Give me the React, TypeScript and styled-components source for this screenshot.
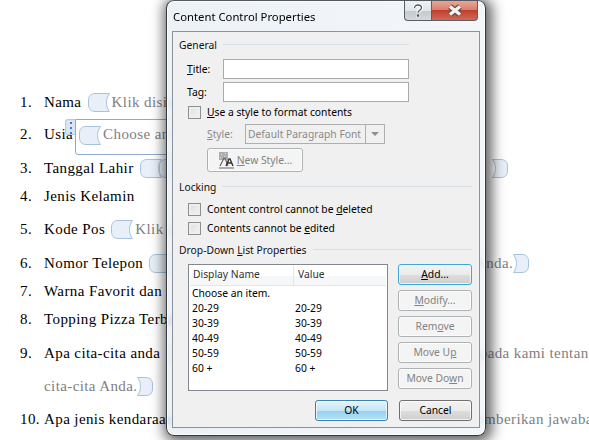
import styled, { createGlobalStyle } from "styled-components";

const GlobalStyle = createGlobalStyle`
  html, body {
    margin: 0;
    padding: 0;
    width: 589px;
    height: 440px;
    overflow: hidden;
    background: #fff;
  }
`;

const Page = styled.div`
  position: relative;
  width: 589px;
  height: 440px;
  overflow: hidden;
  background: #fff;
`;

/* word document behind the dialog */
const DocList = styled.div`
  display: flex;
  flex-direction: column;
  padding-top: 92px;
  font-family: "Liberation Serif", serif;
  font-size: 15px;
  letter-spacing: 0.4px;
  color: #000;
`;

const Row = styled.div<{ $h: number }>`
  display: flex;
  align-items: center;
  height: ${(p) => p.$h}px;
  white-space: nowrap;
`;

const Num = styled.span`
  width: 24px;
  margin-left: 20px;
  flex: none;
`;

const Hint = styled.span<{ $ml?: number }>`
  color: #808080;
  margin-left: ${(p) => p.$ml ?? 2}px;
`;

const Indent = styled.span`
  margin-left: 44px;
  color: #808080;
`;

const Selected = styled.div`
  position: relative;
  display: flex;
  align-items: flex-start;
  width: 400px;
  height: 36px;
  margin-left: 2px;
  margin-top: 4px;
  padding: 6px 0 0 3px;
  box-sizing: border-box;
  border: 1px solid #8fa9cc;
  border-radius: 0 3px 3px 3px;
`;

const Handle = styled.div`
  position: absolute;
  left: -11px;
  top: -1px;
  display: flex;
  flex-direction: column;
  align-items: center;
  gap: 3px;
  width: 10px;
  height: 16px;
  padding-top: 2px;
  box-sizing: border-box;
  background: #dbe5f1;
  border: 1px solid #b8c9de;
  border-right: none;
  border-radius: 3px 0 0 3px;
`;

const Dot = styled.i`
  width: 2px;
  height: 2px;
  background: #3d7fe0;
`;

const CapSvg = styled.svg<{ $ml?: number }>`
  flex: none;
  margin-left: ${(p) => p.$ml ?? 0}px;
`;

const OpenCap = ({ ml = 2 }: { ml?: number }) => (
  <CapSvg $ml={ml} width="22" height="19" viewBox="0 0 22 19">
    <path
      d="M21.5.5H7C3 .5.5 3 .5 7v5c0 4 2.500 6.500 6.500 6.500h14.500C19 15 18.500 12 18.500 9.500S19 4 21.500.5z"
      fill="#e9eff8"
      stroke="#a8c2dc"
    />
  </CapSvg>
);

const CloseCap = ({ ml }: { ml?: number }) => (
  <CapSvg $ml={ml} width="16" height="19" viewBox="0 0 16 19">
    <path
      d="M.5.5H9c4 0 6.500 2.500 6.500 6.500v5c0 4-2.500 6.500-6.500 6.500H.5C3 15 3.500 12 3.500 9.500S3 4 .5.500z"
      fill="#e9eff8"
      stroke="#a8c2dc"
    />
  </CapSvg>
);

/* dialog window */
const Dialog = styled.div`
  position: absolute;
  left: 166px;
  top: 0;
  width: 320px;
  height: 436px;
  box-sizing: border-box;
  display: flex;
  flex-direction: column;
  padding: 0 5px 7px;
  border: 1px solid #35383b;
  border-top-color: #55585c;
  border-radius: 8px;
  background: linear-gradient(90deg, rgba(232, 238, 244, 0.8), rgba(240, 244, 248, 0.8));
  backdrop-filter: blur(3px);
  box-shadow: 2px 2px 13px 4px rgba(0, 0, 0, 0.62), inset 0 0 0 1px rgba(255, 255, 255, 0.75);
  font-family: "Noto Sans", "Open Sans", sans-serif;
  font-size: 10.300px;
  color: #000;
`;

const TitleBar = styled.div`
  display: flex;
  align-items: flex-start;
  justify-content: space-between;
  height: 30px;
  flex: none;
`;

const TitleText = styled.div`
  padding: 8px 0 0 1px;
  font-size: 11.300px;
  line-height: 15px;
`;

const WinButtons = styled.div`
  display: flex;
  margin-right: 2px;
`;

const WinBtn = styled.div<{ $close?: boolean }>`
  display: flex;
  align-items: center;
  justify-content: center;
  height: 20px;
  width: ${(p) => (p.$close ? 46 : 28)}px;
  box-sizing: border-box;
  border: 1px solid #5a5f66;
  border-top: none;
  border-left-width: ${(p) => (p.$close ? 0 : 1)}px;
  border-radius: ${(p) => (p.$close ? "0 0 4px 0" : "0 0 0 4px")};
  background: ${(p) =>
    p.$close
      ? "linear-gradient(180deg, #e8a79a 0%, #d9806f 45%, #c0402c 50%, #cf6a58 100%)"
      : "linear-gradient(180deg, #eef1f3 0%, #e2e6e9 50%, #c3c9cd 52%, #d5d9dc 100%)"};
`;

const Client = styled.div`
  flex: 1;
  display: flex;
  flex-direction: column;
  padding: 5px 6px 0;
  border: 1px solid #8a929b;
  background: #f0f0f0;
`;

const Legend = styled.div<{ $w?: number; $mt?: number }>`
  display: flex;
  align-items: center;
  gap: 6px;
  height: 15px;
  width: ${(p) => (p.$w ? `${p.$w}px` : "auto")};
  margin-top: ${(p) => p.$mt ?? 0}px;
  margin-right: 1px;
  color: #111;
  &::after {
    content: "";
    flex: 1;
    height: 1px;
    background: #d5dfe5;
  }
`;

const FieldRow = styled.div<{ $mt: number }>`
  display: flex;
  align-items: center;
  margin-top: ${(p) => p.$mt}px;
  padding-left: 8px;
`;

const FieldLabel = styled.span`
  width: 36px;
`;

const TextInput = styled.div`
  width: 186px;
  height: 20px;
  box-sizing: border-box;
  background: #fff;
  border: 1px solid #ababab;
`;

const CheckRow = styled.div<{ $mt: number }>`
  display: flex;
  align-items: center;
  gap: 6px;
  height: 13px;
  margin-top: ${(p) => p.$mt}px;
  padding-left: 9px;
`;

const CheckText = styled.span`
  padding-bottom: 2px;
`;

const Box = styled.span`
  flex: none;
  width: 13px;
  height: 13px;
  box-sizing: border-box;
  border: 1px solid #8e8f8f;
  background: linear-gradient(135deg, #dcdcdc, #f6f6f6);
  box-shadow: inset 0 0 0 2px #eee;
`;

const U = styled.span`
  text-decoration: underline;
`;

const StyleRow = styled.div`
  display: flex;
  align-items: center;
  margin-top: 5px;
  padding-left: 28px;
  color: #8a8a8a;
`;

const StyleLabel = styled.span`
  width: 38px;
`;

const Select = styled.div`
  display: flex;
  align-items: center;
  justify-content: space-between;
  width: 140px;
  height: 20px;
  box-sizing: border-box;
  padding-left: 2px;
  border: 1px solid #afafaf;
  white-space: nowrap;
`;

const SelectArrow = styled.span`
  display: flex;
  align-items: center;
  justify-content: center;
  flex: none;
  width: 18px;
  height: 18px;
  border-left: 1px solid #afafaf;
  &::after {
    content: "";
    border: 4px solid transparent;
    border-top: 4px solid #8f8f8f;
    margin-top: 4px;
  }
`;

const Button = styled.div<{ $w?: number; $disabled?: boolean; $primary?: boolean; $focus?: boolean }>`
  display: flex;
  align-items: center;
  justify-content: center;
  flex: none;
  width: ${(p) => p.$w ?? 74}px;
  height: 21px;
  box-sizing: border-box;
  padding-bottom: 1px;
  border-radius: 3px;
  white-space: nowrap;
  color: ${(p) => (p.$disabled ? "#838383" : "#000")};
  border: 1px solid
    ${(p) => (p.$disabled ? "#adb2b5" : p.$primary ? "#3c7fb1" : p.$focus ? "#3fa6d6" : "#707070")};
  background: ${(p) =>
    p.$disabled
      ? "#f4f4f4"
      : p.$primary
        ? "linear-gradient(180deg, #e5f4fc 0%, #c4e5f6 50%, #98d1ef 52%, #b3e0f9 100%)"
        : "linear-gradient(180deg, #f2f2f2 0%, #ebebeb 50%, #dddddd 52%, #cfcfcf 100%)"};
  box-shadow: inset 0 0 0 1px rgba(255, 255, 255, 0.7);
`;

const NewStyleBtn = styled(Button)`
  gap: 1px;
  height: 24px;
  margin-top: 4px;
  margin-left: 28px;
`;

const ListArea = styled.div`
  display: flex;
  gap: 10px;
  margin-top: 7px;
  padding-left: 9px;
`;

const ListBox = styled.div`
  width: 200px;
  height: 127px;
  box-sizing: border-box;
  padding: 1px;
  border: 1px solid #828790;
  background: #fff;
`;

const ListHead = styled.div`
  display: grid;
  grid-template-columns: 103px 1fr;
  height: 19px;
  line-height: 17px;
  color: #333;
  border-bottom: 1px solid #e5e5e5;
  background: linear-gradient(180deg, #fff 50%, #f6f7f9 50%);
`;

const HeadCell = styled.span`
  padding-left: 3px;
  & + & {
    border-left: 1px solid #e3e5e8;
    padding-left: 4px;
  }
`;

const ListRow = styled.div`
  display: grid;
  grid-template-columns: 103px 1fr;
  height: 15px;
  line-height: 15px;
  padding-left: 2px;
`;

const SideButtons = styled.div`
  display: flex;
  flex-direction: column;
  gap: 5px;
`;

const Footer = styled.div`
  display: flex;
  justify-content: flex-end;
  gap: 11px;
  margin-top: 9px;
  padding-right: 1px;
`;

const options = ["20-29", "30-39", "40-49", "50-59", "60 +"];

const NewStyleIcon = () => (
  <svg width="18" height="18" viewBox="0 0 18 18">
    <rect x="1" y="1" width="9" height="8" fill="#a0a0a0" opacity="0.85" />
    <path d="M3 3h1v1H3zM7 2h1v1H7zM2 6h1v1H2zM6 5h1v1H6z" fill="#e6e6e6" />
    <path d="M2 15 6 7h1l3 8" fill="none" stroke="#666" strokeWidth="1.200" />
    <path d="M8 15l3-7h1l3 7M9.500 12h4" fill="none" stroke="#333" strokeWidth="1.400" />
    <path d="M1 17h15" stroke="#666" />
  </svg>
);

const HelpIcon = () => (
  <svg width="12" height="15" viewBox="0 0 12 15">
    <path
      d="M2.500 5C2.500 3 4 2 6 2s3.500 1 3.500 3S6 7.500 6 9.500"
      fill="none"
      stroke="#fff"
      strokeWidth="3.500"
    />
    <path
      d="M2.500 5C2.500 3 4 2 6 2s3.500 1 3.500 3S6 7.500 6 9.500"
      fill="none"
      stroke="#555"
      strokeWidth="1.300"
    />
    <rect x="4.500" y="11" width="3" height="3" fill="#555" stroke="#fff" strokeWidth=".6" />
  </svg>
);

const CloseIcon = () => (
  <svg width="18" height="13" viewBox="0 0 18 13">
    <path d="M4 2.500l10 8M14 2.500l-10 8" stroke="#5c4a46" strokeWidth="5.500" />
    <path d="M4 2.500l10 8M14 2.500l-10 8" stroke="#f4f1ef" strokeWidth="3.500" />
  </svg>
);

export default function App() {
  return (
    <Page>
      <GlobalStyle />
      <DocList>
        <Row $h={20}>
          <Num>1.</Num>Nama&nbsp;
          <OpenCap />
          <Hint>Klik disini untuk memasukkan nama.</Hint>
        </Row>
        <Row $h={45}>
          <Num>2.</Num>Usia
          <Selected>
            <Handle>
              <Dot />
              <Dot />
              <Dot />
            </Handle>
            <OpenCap ml={0} />
            <Hint>Choose an item.</Hint>
          </Selected>
        </Row>
        <Row $h={22}>
          <Num>3.</Num>Tanggal Lahir&nbsp;
          <OpenCap />
          <OpenCap ml={-3} />
          <Hint>Klik disini untuk memasukkan tanggal lahir.</Hint>
          <CloseCap ml={25} />
        </Row>
        <Row $h={34}>
          <Num>4.</Num>Jenis Kelamin
        </Row>
        <Row $h={32}>
          <Num>5.</Num>Kode Pos&nbsp;
          <OpenCap />
          <Hint>Klik disini untuk memasukkan kode pos.</Hint>
        </Row>
        <Row $h={37}>
          <Num>6.</Num>Nomor Telepon&nbsp;
          <OpenCap />
          <Hint $ml={8}>Klik disini untuk memasukkan nomor telepon Anda.</Hint>
          <CloseCap />
        </Row>
        <Row $h={19}>
          <Num>7.</Num>Warna Favorit dan
        </Row>
        <Row $h={36}>
          <Num>8.</Num>Topping Pizza Terbaik
        </Row>
        <Row $h={33}>
          <Num>9.</Num>Apa cita-cita anda&nbsp;
          <OpenCap />
          <Hint $ml={-12}>Klik disini dan silakan ceritakan lebih lanjut kepada kami tentang</Hint>
        </Row>
        <Row $h={33}>
          <Indent>cita-cita Anda.</Indent>
          <CloseCap />
        </Row>
        <Row $h={33}>
          <Num>10.</Num>Apa jenis kendaraan yang Anda miliki saat ini?&nbsp;
          <OpenCap ml={-22} />
          <Hint>Klik disini untuk memberikan jawaban</Hint>
        </Row>
      </DocList>

      <Dialog>
        <TitleBar>
          <TitleText>Content Control Properties</TitleText>
          <WinButtons>
            <WinBtn>
              <HelpIcon />
            </WinBtn>
            <WinBtn $close>
              <CloseIcon />
            </WinBtn>
          </WinButtons>
        </TitleBar>
        <Client>
          <Legend $w={230}>General</Legend>
          <FieldRow $mt={7}>
            <FieldLabel>
              <U>T</U>itle:
            </FieldLabel>
            <TextInput />
          </FieldRow>
          <FieldRow $mt={3}>
            <FieldLabel>
              Ta<U>g</U>:
            </FieldLabel>
            <TextInput />
          </FieldRow>
          <CheckRow $mt={4}>
            <Box />
            <CheckText>
              <U>U</U>se a style to format contents
            </CheckText>
          </CheckRow>
          <StyleRow>
            <StyleLabel>
              <U>S</U>tyle:
            </StyleLabel>
            <Select>
              Default Paragraph Font
              <SelectArrow />
            </Select>
          </StyleRow>
          <NewStyleBtn $w={96} $disabled>
            <NewStyleIcon />
            <span>
              <U>N</U>ew Style...
            </span>
          </NewStyleBtn>
          <Legend $mt={7}>Locking</Legend>
          <CheckRow $mt={9}>
            <Box />
            <CheckText>
              Content control cannot be <U>d</U>eleted
            </CheckText>
          </CheckRow>
          <CheckRow $mt={6}>
            <Box />
            <CheckText>
              Contents cannot be <U>e</U>dited
            </CheckText>
          </CheckRow>
          <Legend $mt={7}>
            <span>
              Drop-Down <U>L</U>ist Properties
            </span>
          </Legend>
          <ListArea>
            <ListBox>
              <ListHead>
                <HeadCell>Display Name</HeadCell>
                <HeadCell>Value</HeadCell>
              </ListHead>
              <ListRow>
                <span>Choose an item.</span>
                <span />
              </ListRow>
              {options.map((o) => (
                <ListRow key={o}>
                  <span>{o}</span>
                  <span>{o}</span>
                </ListRow>
              ))}
            </ListBox>
            <SideButtons>
              <Button $focus>
                <span>
                  <U>A</U>dd...
                </span>
              </Button>
              <Button $disabled>
                <span>
                  <U>M</U>odify...
                </span>
              </Button>
              <Button $disabled>
                <span>
                  Rem<U>o</U>ve
                </span>
              </Button>
              <Button $disabled>
                <span>
                  Move U<U>p</U>
                </span>
              </Button>
              <Button $disabled>
                <span>
                  Move Do<U>w</U>n
                </span>
              </Button>
            </SideButtons>
          </ListArea>
          <Footer>
            <Button $primary $w={73}>
              OK
            </Button>
            <Button $w={73}>Cancel</Button>
          </Footer>
        </Client>
      </Dialog>
    </Page>
  );
}
